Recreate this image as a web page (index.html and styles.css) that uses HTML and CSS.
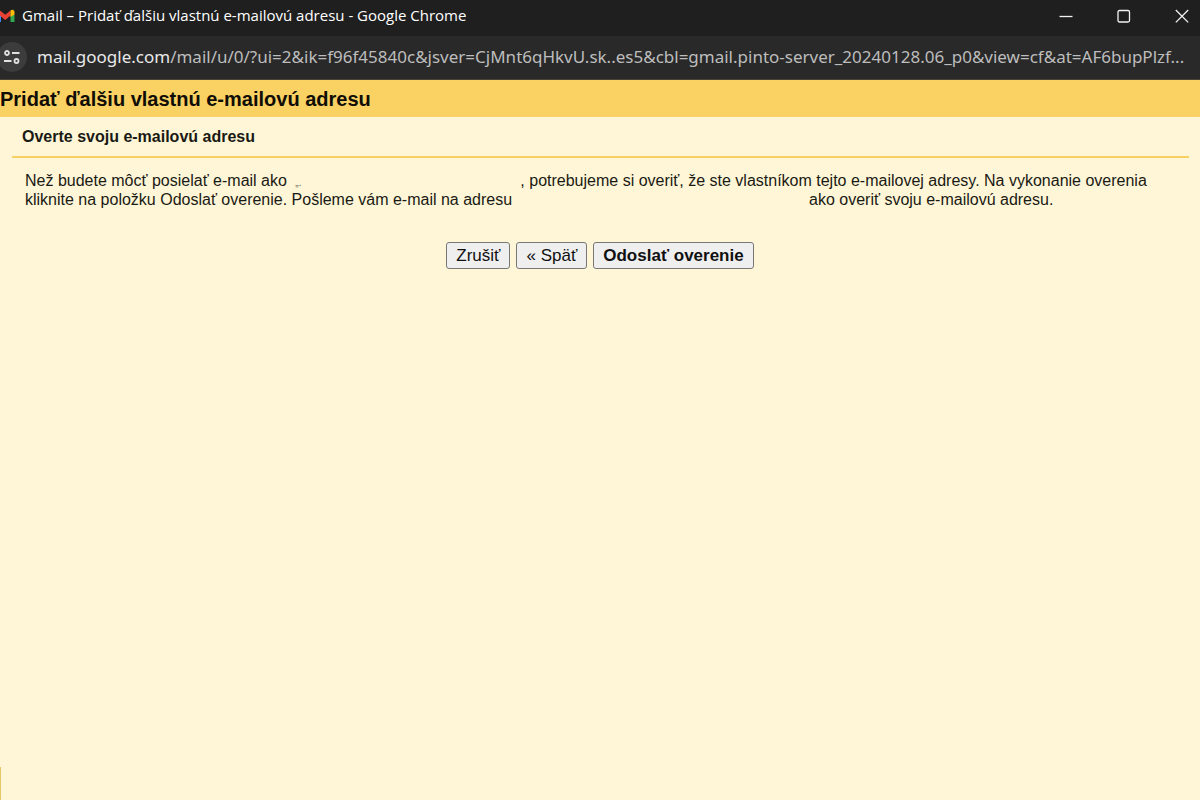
FILE: index.html
```html
<!DOCTYPE html>
<html lang="sk">
<head>
  <meta charset="UTF-8">
  <meta name="viewport" content="width=device-width, initial-scale=1.0">
  <title>Gmail – Pridať ďalšiu vlastnú e-mailovú adresu</title>
  <link rel="stylesheet" href="styles.css">
</head>
<body>
  <header class="titlebar">
    <svg class="gmail-icon" viewBox="0 0 15 14" aria-hidden="true">
      <path d="M0 6l1 .8V13H0z" fill="#4285f4"/>
      <path d="M10.500 5.500h4V13h-4z" fill="#34a853"/>
      <path d="M0 1.500L5.300 5.800 10.500 1.500v5L5.300 11 0 6.700z" fill="#ea4335"/>
      <path d="M10.500 1.500C12.500-.2 14.500 1 14.500 3v2.500l-4 2.500z" fill="#fbbc04"/>
    </svg>
    <span class="window-title">Gmail – Pridať ďalšiu vlastnú e-mailovú adresu - Google Chrome</span>
    <div class="window-controls">
      <button type="button" aria-label="Minimalizovať">
        <svg viewBox="0 0 14 14"><path d="M0.500 7.500h13"/></svg>
      </button>
      <button type="button" aria-label="Maximalizovať">
        <svg viewBox="0 0 14 14"><rect x="1" y="1.500" width="11.500" height="11.500" rx="1.500"/></svg>
      </button>
      <button type="button" aria-label="Zavrieť">
        <svg viewBox="0 0 14 14"><path d="M0.800 1l12.400 12.400M13.200 1L0.800 13.400"/></svg>
      </button>
    </div>
  </header>

  <div class="addressbar">
    <button class="site-info" type="button" aria-label="Informácie o stránke">
      <svg viewBox="0 0 16 16">
        <circle cx="3" cy="4" r="2"/>
        <path d="M8 4h7.500M0 12h7.500"/>
        <circle cx="12.500" cy="12" r="2"/>
      </svg>
    </button>
    <div class="url"><span class="host">mail.google.com</span>/mail/u/0/?ui=2&amp;ik=f96f45840c&amp;jsver=CjMnt6qHkvU.sk..es5&amp;cbl=gmail.pinto-server_20240128.06_p0&amp;view=cf&amp;at=AF6bupPlzf...</div>
  </div>

  <main>
    <h1>Pridať ďalšiu vlastnú e-mailovú adresu</h1>
    <h2>Overte svoju e-mailovú adresu</h2>
    <form class="verify">
      <p>Než budete môcť posielať e-mail ako <span class="blank blank-name">„.</span>, potrebujeme si overiť, že ste vlastníkom tejto e-mailovej adresy. Na vykonanie overenia kliknite na položku Odoslať overenie. Pošleme vám e-mail na adresu <span class="blank blank-address"></span> ako overiť svoju e-mailovú adresu.</p>
      <div class="actions">
        <button type="button">Zrušiť</button>
        <button type="button">« Späť</button>
        <button class="primary" type="submit">Odoslať overenie</button>
      </div>
    </form>
  </main>
  <div class="edge"></div>
</body>
</html>
```

FILE: styles.css
```css
body {
  margin: 0;
  min-height: 100vh;
  display: flex;
  flex-direction: column;
  background-color: #fff6d7;
  color: #1a1a14;
  font-family: "Liberation Sans", Arial, sans-serif;
  font-size: 16px;
}
main {
  flex: 1;
}

/* browser window */
.titlebar {
  display: flex;
  align-items: center;
  height: 36px;
  background-color: #1f1f1f;
  color: #fff;
}
.gmail-icon {
  width: 15px;
  height: 14px;
  margin: 0 7px 4px 0;
}
.window-title {
  flex: 1;
  padding-bottom: 6px;
  font-family: "Open Sans", sans-serif;
  font-size: 15px;
  line-height: 20px;
}
.window-controls {
  display: flex;
  gap: 30px;
  padding: 0 4px 4px 0;
}
.window-controls button {
  display: flex;
  width: 28px;
  padding: 0 7px;
  border: none;
  background: none;
}
.window-controls svg {
  width: 14px;
  height: 14px;
  fill: none;
  stroke: #f2f2f2;
  stroke-width: 1.3;
}
.addressbar {
  display: flex;
  align-items: center;
  gap: 10px;
  height: 42px;
  padding-bottom: 1px;
  border-bottom: 1px solid #4a4334;
  background-color: #292929;
  overflow: hidden;
}
.site-info {
  flex: none;
  display: flex;
  width: 30px;
  height: 30px;
  margin-left: -3px;
  padding: 7px;
  border: none;
  border-radius: 50%;
  background-color: #3c3c3c;
}
.site-info svg {
  width: 16px;
  height: 16px;
  fill: none;
  stroke: #e0e0e0;
  stroke-width: 1.8;
}
.url {
  color: #bdbdbd;
  font-family: "Noto Sans", sans-serif;
  font-size: 17px;
  line-height: 24px;
  white-space: nowrap;
}
.host {
  color: #e8e8e8;
}

/* page */
h1 {
  margin: 0;
  padding: 7px 0 6px;
  background-color: #fad163;
  color: #0f0d05;
  font-size: 20px;
  line-height: 24px;
}
h2 {
  margin: 0 11px 0 12px;
  padding: 10px 10px;
  border-bottom: 2px solid #f9d163;
  font-size: 16px;
  line-height: 19px;
}
.verify p {
  margin: 13px 25px 0;
  line-height: 19px;
}
.blank {
  display: inline-block;
  padding-left: 4px;
  color: #6d6753;
  font-size: 10px;
  line-height: 10px;
}
.blank-name {
  width: 225px;
}
.blank-address {
  width: 284px;
}
.actions {
  display: flex;
  justify-content: center;
  gap: 6px;
  margin-top: 33px;
}
.actions button {
  height: 27px;
  padding: 0 9px;
  border: 1px solid #777;
  border-radius: 3px;
  background-color: #efefef;
  color: #111;
  font-family: inherit;
  font-size: 17px;
}
.actions .primary {
  font-weight: bold;
}
.edge {
  width: 1px;
  height: 33px;
  background-color: #e9c869;
}
```
